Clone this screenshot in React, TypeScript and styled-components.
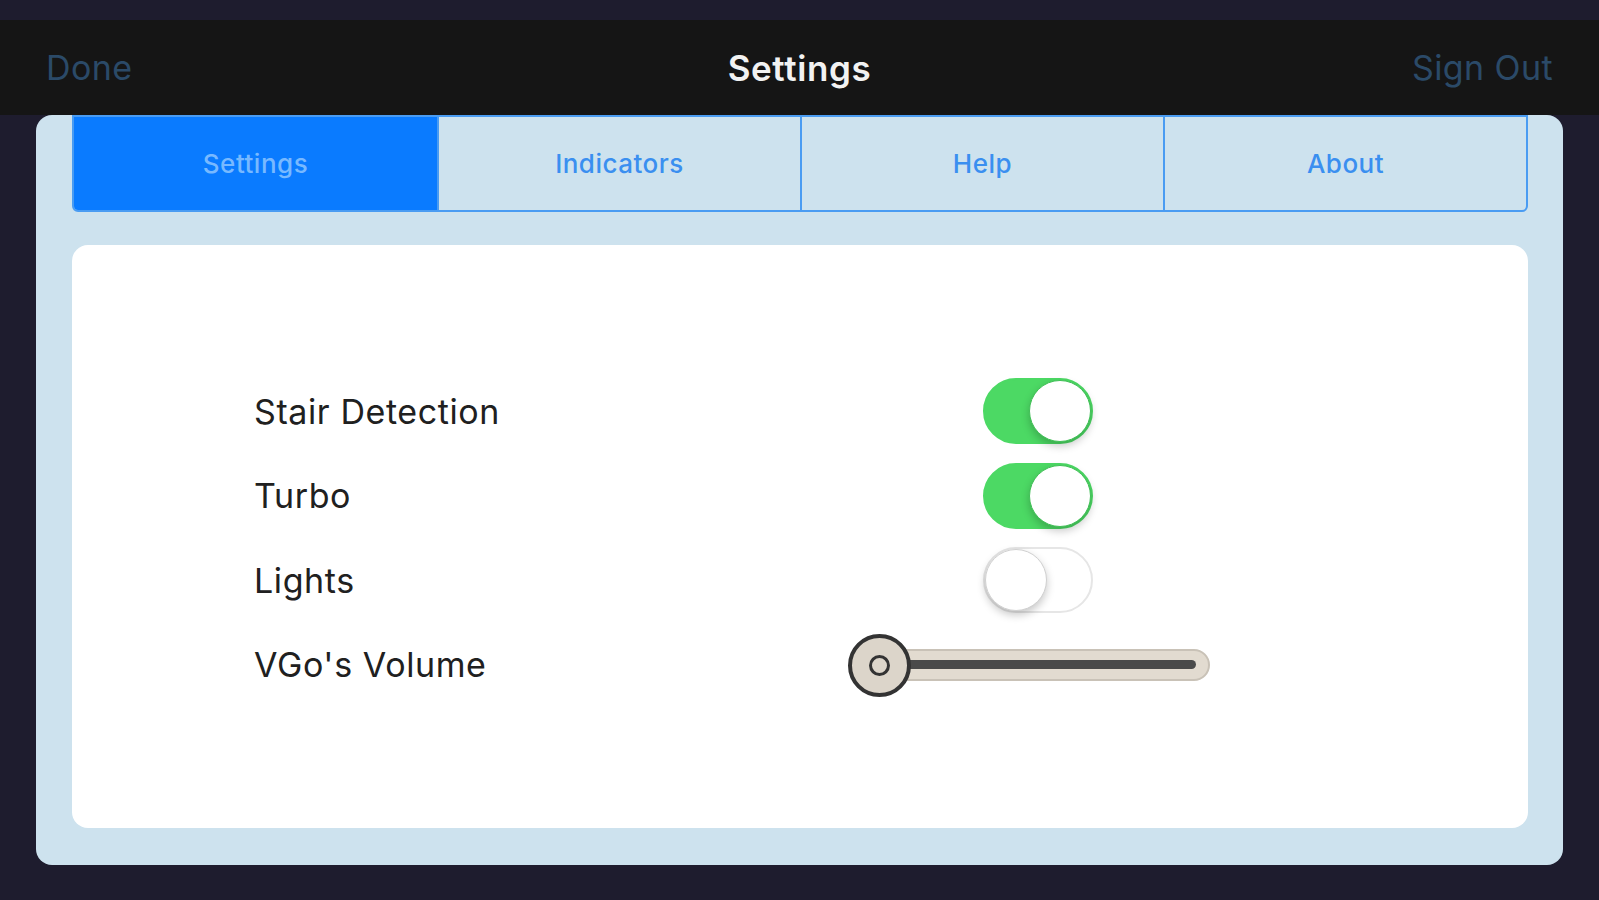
import styled, { createGlobalStyle } from "styled-components";

const GlobalStyle = createGlobalStyle`
  html, body {
    margin: 0;
    padding: 0;
    background: #1e1c2e;
  }
  body {
    font-family: Inter, "Noto Sans", sans-serif;
  }
`;

type Row = {
  label: string;
  kind: "toggle" | "slider";
  on?: boolean;
  value?: number;
};

const rows: Row[] = [
  { label: "Stair Detection", kind: "toggle", on: true },
  { label: "Turbo", kind: "toggle", on: true },
  { label: "Lights", kind: "toggle", on: false },
  { label: "VGo's Volume", kind: "slider", value: 0 },
];

const tabs = ["Settings", "Indicators", "Help", "About"];

function Toggle({ on }: { on: boolean }) {
  return (
    <Track $on={on}>
      <Knob $on={on} />
    </Track>
  );
}

function Slider({ value }: { value: number }) {
  return (
    <SliderBox>
      <Groove>
        <Line />
      </Groove>
      <Thumb style={{ left: `${value * 300}px` }}>
        <ThumbRing />
      </Thumb>
    </SliderBox>
  );
}

function App() {
  const active = 0;

  return (
    <Page>
      <GlobalStyle />
      <TopStrip />
      <NavBar>
        <NavButton $align="left">Done</NavButton>
        <Title>Settings</Title>
        <NavButton $align="right">Sign Out</NavButton>
      </NavBar>

      <Panel>
        <Tabs>
          {tabs.map((t, i) => (
            <Tab key={t} $active={i === active}>
              {t}
            </Tab>
          ))}
        </Tabs>

        <Card>
          <List>
            {rows.map((r) => (
              <SettingRow key={r.label}>
                <Label>{r.label}</Label>
                <Control>
                  {r.kind === "toggle" ? (
                    <Toggle on={!!r.on} />
                  ) : (
                    <Slider value={r.value || 0} />
                  )}
                </Control>
              </SettingRow>
            ))}
          </List>
        </Card>
      </Panel>
    </Page>
  );
}

export default App;

const Page = styled.div`
  width: 1599px;
  height: 900px;
  background: #1e1c2e;
  overflow: hidden;
`;

const TopStrip = styled.div`
  height: 20px;
`;

const NavBar = styled.div`
  height: 95px;
  background: #151515;
  display: grid;
  grid-template-columns: 1fr auto 1fr;
  align-items: center;
  padding: 0 46px 0 46px;
`;

const NavButton = styled.span<{ $align: "left" | "right" }>`
  font-size: 34px;
  letter-spacing: 0.4px;
  color: #2b4a68;
  justify-self: ${(p) => (p.$align === "left" ? "start" : "end")};
`;

const Title = styled.span`
  font-size: 35px;
  font-weight: 600;
  letter-spacing: 0.6px;
  color: #f2f2f2;
`;

const Panel = styled.div`
  margin: 0 36px;
  height: 750px;
  box-sizing: border-box;
  background: #cde2ee;
  border-radius: 16px;
  padding: 0 35px 37px 36px;
  display: flex;
  flex-direction: column;
  gap: 33px;
`;

const Tabs = styled.div`
  display: grid;
  grid-template-columns: repeat(4, 1fr);
  height: 97px;
  box-sizing: border-box;
  border: 2px solid #4a9cf2;
  border-radius: 0 0 6px 6px;
  overflow: hidden;
`;

const Tab = styled.div<{ $active: boolean }>`
  display: flex;
  align-items: center;
  justify-content: center;
  font-size: 26px;
  font-weight: 500;
  letter-spacing: 0.5px;
  color: ${(p) => (p.$active ? "#78b9ff" : "#3a8ff0")};
  background: ${(p) => (p.$active ? "#0a7bff" : "transparent")};
  & + & {
    border-left: 2px solid #4a9cf2;
  }
`;

const Card = styled.div`
  flex: 1;
  background: #ffffff;
  border-radius: 16px;
  display: flex;
  align-items: center;
  padding-left: 182px;
`;

const List = styled.div`
  display: flex;
  flex-direction: column;
  margin-top: 3px;
`;

const SettingRow = styled.div`
  display: grid;
  grid-template-columns: 594px 362px;
  height: 84.6px;
  align-items: center;
`;

const Label = styled.span`
  font-size: 34px;
  letter-spacing: 0.6px;
  color: #202020;
`;

const Control = styled.div`
  display: flex;
  justify-content: center;
  padding-left: 17px;
`;

const Track = styled.div<{ $on: boolean }>`
  position: relative;
  width: 110px;
  height: 66px;
  box-sizing: border-box;
  border-radius: 33px;
  background: ${(p) => (p.$on ? "#4cd964" : "#ffffff")};
  border: 2px solid ${(p) => (p.$on ? "#4cd964" : "#e6e6e6")};
`;

const Knob = styled.div<{ $on: boolean }>`
  position: absolute;
  top: 0;
  left: ${(p) => (p.$on ? "44px" : "0")};
  width: 62px;
  height: 62px;
  box-sizing: border-box;
  border-radius: 50%;
  background: #ffffff;
  border: 1px solid ${(p) => (p.$on ? "#3fbf55" : "#d0d0d0")};
  box-shadow: 0 4px 8px rgba(0, 0, 0, 0.22);
`;

const SliderBox = styled.div`
  position: relative;
  width: 362px;
  height: 62px;
  margin-left: -17px;
  display: flex;
  align-items: center;
`;

const Groove = styled.div`
  margin-left: 31px;
  flex: 1;
  height: 32px;
  box-sizing: border-box;
  border-radius: 16px;
  background: #e2dbd0;
  border: 2px solid #c9c2b7;
  display: flex;
  align-items: center;
  padding: 0 12px 0 0;
`;

const Line = styled.div`
  flex: 1;
  height: 9px;
  border-radius: 5px;
  background: #4a4a4a;
`;

const Thumb = styled.div`
  position: absolute;
  top: 0;
  width: 63px;
  height: 63px;
  box-sizing: border-box;
  border-radius: 50%;
  background: #dcd5ca;
  border: 4px solid #333333;
  display: flex;
  align-items: center;
  justify-content: center;
`;

const ThumbRing = styled.div`
  width: 21px;
  height: 21px;
  box-sizing: border-box;
  border-radius: 50%;
  border: 3px solid #333333;
`;
